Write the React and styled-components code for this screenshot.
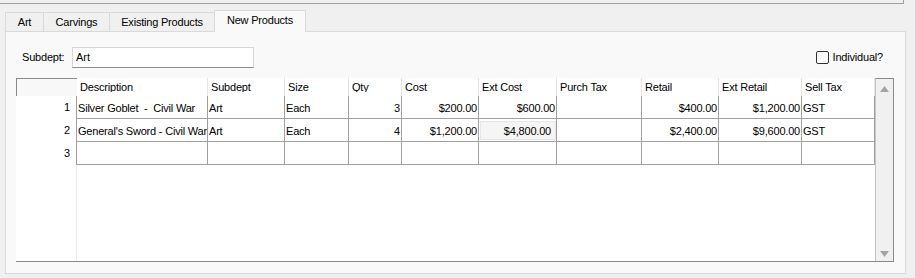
import React from 'react';
import styled, { createGlobalStyle } from 'styled-components';

const GlobalStyle = createGlobalStyle`
  html, body {
    margin: 0;
    padding: 0;
    background: #f0f0f0;
    font-family: "Liberation Sans", Arial, sans-serif;
    font-size: 11px;
    color: #000;
  }
`;

const Page = styled.div`
  width: 915px;
  height: 278px;
  overflow: hidden;
`;

const TopFrame = styled.div`
  width: 903px;
  height: 3px;
  border-bottom: 1px solid #a0a0a0;
  border-right: 1px solid #a0a0a0;
`;

const TabBar = styled.div`
  display: flex;
  align-items: flex-end;
  height: 22px;
  margin-top: 6px;
  margin-bottom: -1px;
  padding-left: 5px;
  position: relative;
  z-index: 1;
`;

const Tab = styled.div`
  box-sizing: border-box;
  width: ${p => p.$w}px;
  height: ${p => (p.$active ? 22 : 20)}px;
  margin-left: ${p => (p.$first ? 0 : -1)}px;
  border: 1px solid #d9d9d9;
  border-bottom: ${p => (p.$active ? 'none' : '1px solid #d9d9d9')};
  background: ${p => (p.$active ? '#f9f9f9' : '#f0f0f0')};
  display: flex;
  align-items: center;
  justify-content: center;
  padding-bottom: ${p => (p.$active ? 3 : 0)}px;
  letter-spacing: -0.2px;
  position: relative;
  z-index: ${p => (p.$active ? 2 : 1)};
`;

const Panel = styled.div`
  box-sizing: border-box;
  width: 901px;
  height: 243px;
  margin-left: 5px;
  border: 1px solid #dadada;
  background: #f9f9f9;
  padding: 15px 0 10px 10px;
  display: flex;
  flex-direction: column;
`;

const FilterRow = styled.div`
  display: flex;
  align-items: center;
  height: 20px;
  padding-left: 6px;
  padding-right: 22px;
`;

const FieldLabel = styled.span`
  width: 50px;
  letter-spacing: -0.2px;
`;

const TextBox = styled.div`
  box-sizing: border-box;
  width: 182px;
  height: 21px;
  background: #fff;
  border: 1px solid #d6d6d6;
  border-bottom-color: #8d8d8d;
  padding: 0 3px;
  display: flex;
  align-items: center;
`;

const CheckWrap = styled.label`
  margin-left: auto;
  display: flex;
  align-items: center;
  gap: 4px;
  letter-spacing: -0.2px;
`;

const CheckBox = styled.span`
  box-sizing: border-box;
  width: 13px;
  height: 13px;
  border: 1px solid #333;
  border-radius: 2px;
  background: #fff;
`;

const Grid = styled.div`
  display: flex;
  width: 878px;
  height: 184px;
  margin-top: 11px;
  box-sizing: border-box;
  border-bottom: 1px solid #88888f;
`;

const Table = styled.div`
  display: flex;
  flex-direction: column;
  width: 859px;
  background: #fff;
`;

const Row = styled.div`
  display: flex;
  height: ${p => (p.$header ? 18 : 23)}px;
  flex-shrink: 0;
`;

const Corner = styled.div`
  box-sizing: border-box;
  width: 61px;
  border-top: 1px solid #8a8a8a;
  border-left: 1px solid #8a8a8a;
  background: #f8f8f8;
`;

const HeadCell = styled.div`
  box-sizing: border-box;
  width: ${p => p.$w}px;
  border-right: 1px solid #e4e4e4;
  padding: 2px 0 0 3px;
  background: #fff;
`;

const HeadLabel = styled.div`
  height: 12px;
  line-height: 14px;
  overflow: hidden;
  white-space: nowrap;
  letter-spacing: -0.2px;
`;

const RowNum = styled.div`
  box-sizing: border-box;
  width: 61px;
  border-right: 1px solid #a0a0a0;
  text-align: right;
  padding-right: 6px;
  line-height: 23px;
`;

const Cell = styled.div`
  box-sizing: border-box;
  width: ${p => p.$w}px;
  border-right: 1px solid #a0a0a0;
  border-bottom: 1px solid #a0a0a0;
  display: flex;
  align-items: center;
  justify-content: ${p => (p.$right ? 'flex-end' : 'flex-start')};
  padding: ${p => (p.$right ? '1px 1px 0 0' : '1px 0 0 1px')};
  white-space: pre;
  overflow: hidden;
  letter-spacing: -0.2px;
`;

const FocusBox = styled.div`
  box-sizing: border-box;
  align-self: stretch;
  flex: 1;
  margin: 1px -1px 1px 1px;
  background: #f5f5f5;
  border: 1px solid #e6e6e6;
  display: flex;
  align-items: center;
  justify-content: flex-end;
  padding-right: 4px;
`;

const Filler = styled.div`
  flex: 1;
  display: flex;
`;

const FillerHead = styled.div`
  width: 61px;
  border-right: 1px solid #ececec;
  box-sizing: border-box;
`;

const ScrollBar = styled.div`
  box-sizing: border-box;
  width: 19px;
  background: #f0f0f0;
  border-top: 1px solid #8a8a92;
  border-left: 1px solid #c4c4c8;
  border-right: 1px solid #88888f;
  display: flex;
  flex-direction: column;
  justify-content: space-between;
  align-items: center;
  padding: 7px 0 4px;
`;

const Arrow = ({ down }) => (
  <svg width="9" height="6" viewBox="0 0 9 6">
    {down
      ? <polygon points="0,0 9,0 4.5,6" fill="#a3a3a3" />
      : <polygon points="0,6 9,6 4.5,0" fill="#a3a3a3" />}
  </svg>
);

const columns = [
  { key: 'desc', label: 'Description', w: 131 },
  { key: 'sub', label: 'Subdept', w: 77 },
  { key: 'size', label: 'Size', w: 64 },
  { key: 'qty', label: 'Qty', w: 53, right: true },
  { key: 'cost', label: 'Cost', w: 77, right: true },
  { key: 'ext', label: 'Ext Cost', w: 78, right: true },
  { key: 'purch', label: 'Purch Tax', w: 85 },
  { key: 'retail', label: 'Retail', w: 77, right: true },
  { key: 'extRetail', label: 'Ext Retail', w: 83, right: true },
  { key: 'tax', label: 'Sell Tax', w: 73 },
];

const rows = [
  { desc: 'Silver Goblet  -  Civil War', sub: 'Art', size: 'Each', qty: '3', cost: '$200.00', ext: '$600.00', retail: '$400.00', extRetail: '$1,200.00', tax: 'GST' },
  { desc: "General's Sword - Civil War", sub: 'Art', size: 'Each', qty: '4', cost: '$1,200.00', ext: '$4,800.00', retail: '$2,400.00', extRetail: '$9,600.00', tax: 'GST', focus: 'ext' },
  {},
];

const tabs = [
  { label: 'Art', w: 39 },
  { label: 'Carvings', w: 67 },
  { label: 'Existing Products', w: 106 },
  { label: 'New Products', w: 92, active: true },
];

export default function App() {
  return (
    <Page>
      <GlobalStyle />
      <TopFrame />
      <TabBar>
        {tabs.map((t, i) => (
          <Tab key={t.label} $w={t.w} $active={t.active} $first={i === 0}>{t.label}</Tab>
        ))}
      </TabBar>
      <Panel>
        <FilterRow>
          <FieldLabel>Subdept:</FieldLabel>
          <TextBox>Art</TextBox>
          <CheckWrap>
            <CheckBox />
            Individual?
          </CheckWrap>
        </FilterRow>
        <Grid>
          <Table>
            <Row $header>
              <Corner />
              {columns.map(c => (
                <HeadCell key={c.key} $w={c.w}><HeadLabel>{c.label}</HeadLabel></HeadCell>
              ))}
            </Row>
            {rows.map((r, i) => (
              <Row key={i}>
                <RowNum>{i + 1}</RowNum>
                {columns.map(c => (
                  <Cell key={c.key} $w={c.w} $right={c.right}>
                    {r.focus === c.key ? <FocusBox>{r[c.key]}</FocusBox> : r[c.key]}
                  </Cell>
                ))}
              </Row>
            ))}
            <Filler>
              <FillerHead />
            </Filler>
          </Table>
          <ScrollBar>
            <Arrow />
            <Arrow down />
          </ScrollBar>
        </Grid>
      </Panel>
    </Page>
  );
}
